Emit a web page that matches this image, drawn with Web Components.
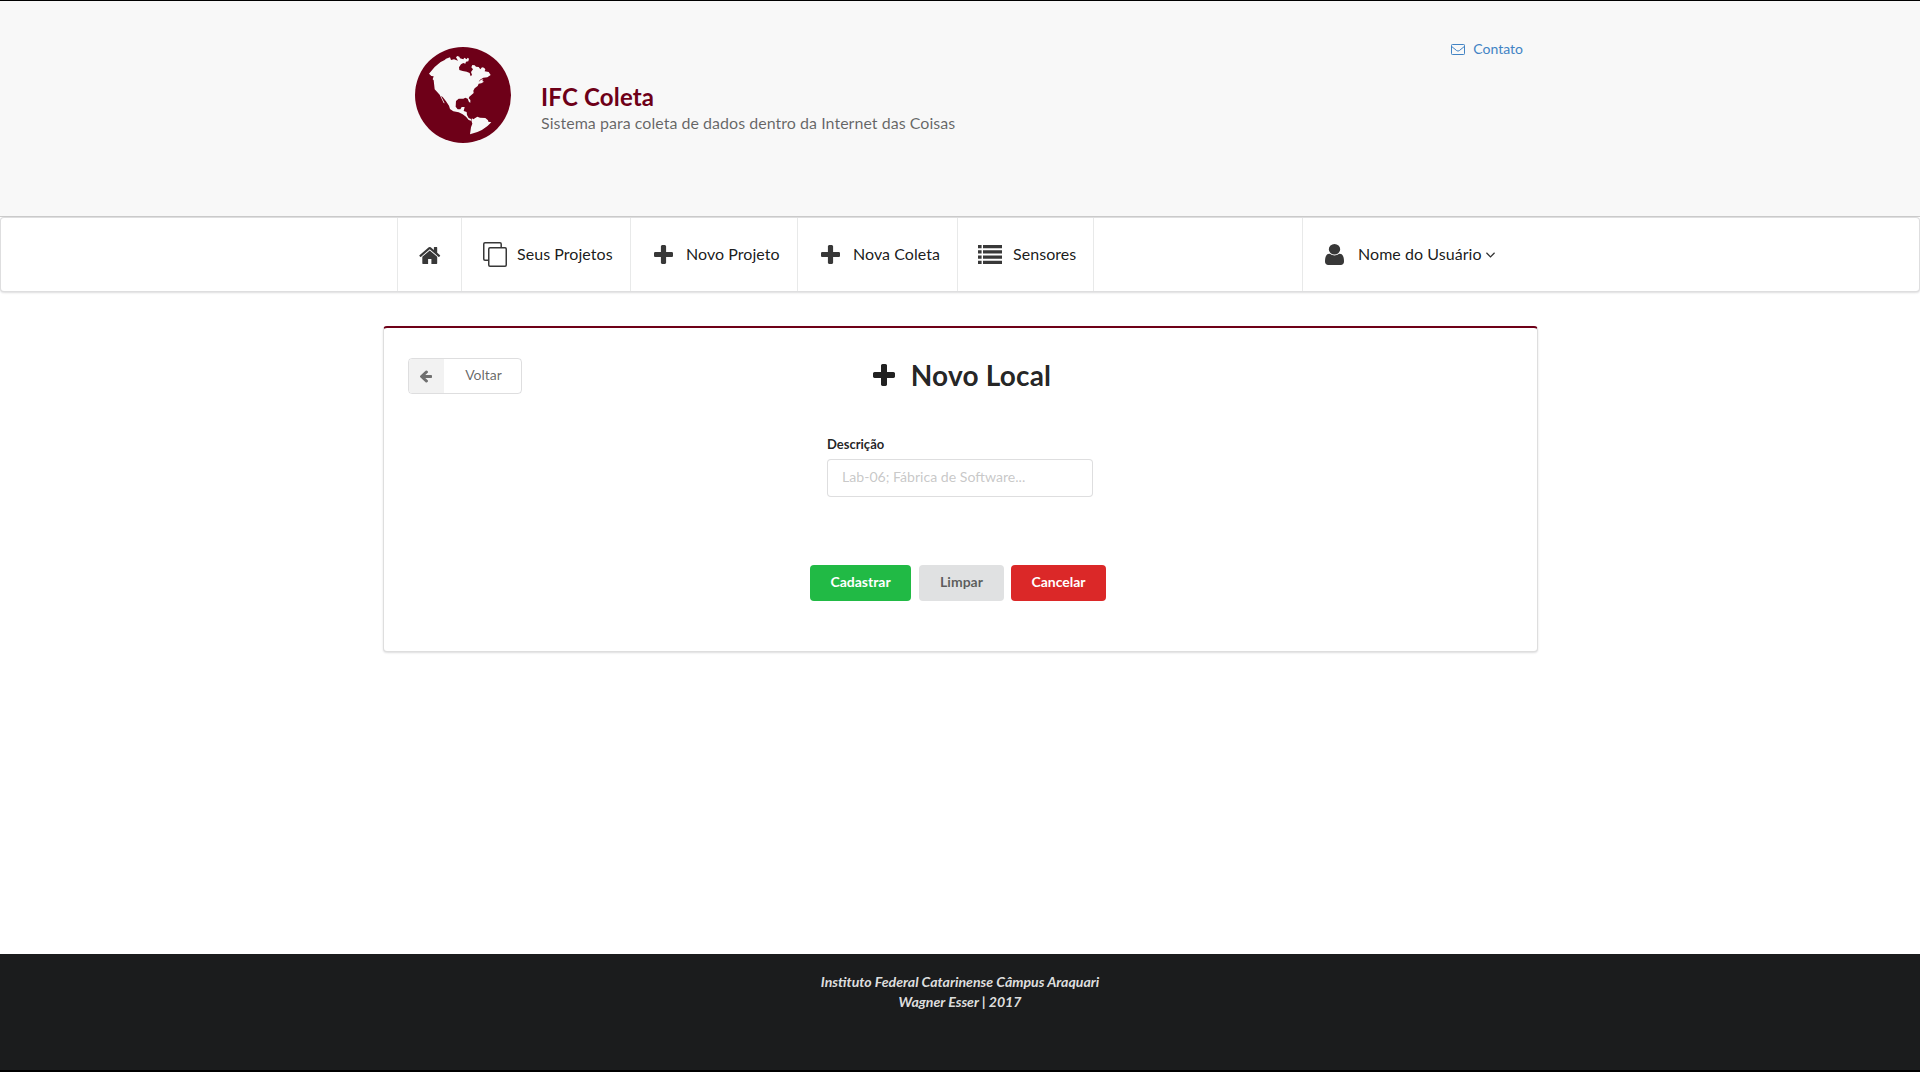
<!DOCTYPE html>
<html lang="pt-BR">
<head>
<meta charset="utf-8">
<title>IFC Coleta</title>
<style>
html,body{margin:0;padding:0}
body{font-family:Lato,"Liberation Sans",sans-serif;font-size:14px;line-height:20px;color:rgba(0,0,0,.87);background:#fff;overflow:hidden}
</style>
</head>
<body>
<coleta-app></coleta-app>
<script>
const ICONS = {
  globe: ['45 51 288 288', '<circle cx="189" cy="195" r="144"/><path fill="#f8f8f8" d="M87 131L104 111L122 96L134 90L138 86L150 82L153 90L162 88L174 92L168 82L172 78L178 80L180 85L190 88L193 83L200 88L203 83L207 86L205 94L198 95L196 101L190 99L183 103L177 112L178 120L188 123L200 125L209 129L212 139L216 135L213 126L219 118L214 112L217 105L224 106L228 110L236 111L241 118L246 112L252 113L256 118L254 124L266 126L272 135L262 142L250 143L240 149L236 156L243 149L250 148L247 153L252 155L244 160L236 161L233 168L224 175L220 182L221 189L208 200L206 205L211 210V218L207 216L203 206L196 203L190 206L176 206L168 213L167 230L173 238L181 238L185 231L194 231L191 243L200 246L201 255L206 264L213 267V272L206 270L198 260L188 253L176 247L160 244L150 237L147 227L138 214L128 201L123 198L134 220L131 219L119 194L104 178L101 151L98 148L101 139L94 138ZM214 271L216 265L220 268L232 260L240 263L256 264L264 271L265 275L274 277Q250 305 210 313L213 292L217 281Z"/>'],
  home: ['64 253 1664 1283', '<path d="M1472 992v480q0 26-19 45t-45 19h-384v-384h-256v384h-384q-26 0-45-19t-19-45v-480q0-1 .5-3t.5-3l575-474 575 474q1 2 1 6zm223-69l-62 74q-8 9-21 11h-3q-13 0-21-7l-692-577-692 577q-12 8-24 7-13-2-21-11l-62-74q-8-10-7-23.5t11-21.5l719-599q32-26 76-26t76 26l244 204v-195q0-14 9-23t23-9h192q14 0 23 9t9 23v408l219 182q10 8 11 21.5t-7 23.5z"/>'],
  copy: ['0 0 24 25', '<g fill="none" stroke="currentColor" stroke-width="1.5"><rect x="5.75" y="5.75" width="17.5" height="18.5" rx="1.2"/><path d="M5.5 18.2H2Q.75 18.2 .75 17V2Q.75.75 2 .75H17Q18.2.75 18.2 2V5.5"/></g>'],
  plus: ['192 128 1408 1408', '<path d="M1600 736v192q0 40-28 68t-68 28h-416v416q0 40-28 68t-68 28h-192q-40 0-68-28t-28-68v-416h-416q-40 0-68-28t-28-68v-192q0-40 28-68t68-28h416v-416q0-40 28-68t68-28h192q40 0 68 28t28 68v416h416q40 0 68 28t28 68z"/>'],
  list: ['0 0 24 19', '<path d="M0 0h3.6v3.2H0zM5 0h19v3.2H5zM0 5.2h3.6v3.2H0zM5 5.2h19v3.2H5zM0 10.5h3.6v3.2H0zM5 10.5h19v3.2H5zM0 15.8h3.6V19H0zM5 15.8h19V19H5z"/>'],
  user: ['256 128 1280 1536', '<path d="M1536 1399q0 109-62.5 187t-150.5 78h-854q-88 0-150.5-78t-62.5-187q0-85 8.5-160.5t31.5-152 58.5-131 94-89 134.5-34.5q131 128 313 128t313-128q76 0 134.5 34.5t94 89 58.5 131 31.5 152 8.5 160.5zm-256-887q0 159-112.5 271.5t-271.5 112.5-271.5-112.5-112.5-271.5 112.5-271.5 271.5-112.5 271.5 112.5 112.5 271.5z"/>'],
  mail: ['0 0 14 11', '<g fill="none" stroke="currentColor"><rect x=".5" y=".5" width="13" height="10" rx=".8"/><path d="M.8 2.6L5.7 6.6Q7 7.6 8.3 6.6L13.2 2.6"/></g>'],
  down: ['0 0 9 6', '<path d="M.4 .8L4.5 4.9L8.6 .8" fill="none" stroke="currentColor" stroke-width="1.3"/>'],
  left: ['64 125 1472 1667', '<path d="M1536 896v128q0 53-32.500 90.500t-84.500 37.500h-704l293 294q38 36 38 90t-38 90l-75 76q-37 37-90 37-52 0-91-37l-651-652q-37-37-37-90 0-52 37-91l651-650q38-38 91-38 52 0 90 38l75 74q38 38 38 91t-38 91l-293 293h704q52 0 84.500 37.500t32.500 90.500z"/>']
};
const define = (name, render) => customElements.define(name, class extends HTMLElement {
  connectedCallback() {
    if (!this.shadowRoot) this.attachShadow({mode: 'open'}).innerHTML = render(this);
  }
});

define('ui-icon', el => {
  const [box, art] = ICONS[el.getAttribute('name')];
  return `<style>:host{display:block;flex:none;width:${el.getAttribute('w')}px;height:${el.getAttribute('h')}px}svg{display:block;width:100%;height:100%}</style>
  <svg viewBox="${box}" preserveAspectRatio="none" fill="currentColor">${art}</svg>`;
});

define('site-header', () => `<style>
:host{display:block;box-sizing:border-box;height:217px;background:#f8f8f8;border-top:1px solid #000;border-bottom:1px solid #ccc}
.in{width:1127px;margin:0 auto;display:flex;align-items:flex-start;box-sizing:border-box;padding-left:18px}
.logo{color:#6e0018;margin-top:46px}
.t{margin:80px 0 0 30.500px;flex:1}
h1{margin:0;font-size:24px;line-height:31px;color:#6e0018;font-weight:700;letter-spacing:.18px}
p{margin:0;font-size:16px;line-height:21px;color:rgba(0,0,0,.6);letter-spacing:.03px}
a{display:flex;align-items:center;color:#4183c4;margin:38px 0.500px 0 0;gap:8px}
</style><div class="in"><ui-icon class="logo" name="globe" w="96" h="96"></ui-icon>
<div class="t"><h1>IFC Coleta</h1><p>Sistema para coleta de dados dentro da Internet das Coisas</p></div>
<a><ui-icon name="mail" w="14" h="11"></ui-icon><span>Contato</span></a></div>`);

define('nav-item', el => `<style>
:host{display:flex;align-items:center;box-sizing:border-box;height:73px;width:${el.getAttribute('width')}px;padding-left:${el.getAttribute('pad')}px;border-left:1px solid rgba(34,36,38,.1);font-size:16px;line-height:20px;letter-spacing:.05px;color:rgba(0,0,0,.9);white-space:nowrap}
.i{display:flex;color:#383838;width:${el.getAttribute('slotw')}px}
.l{display:flex;align-items:center;margin-top:-2px}
</style><div class="i"><slot name="icon"></slot></div><div class="l"><slot></slot></div>`);

define('site-nav', () => `<style>
:host{display:flex;justify-content:center;box-sizing:border-box;height:75px;background:#fff;border:1px solid rgba(34,36,38,.15);border-radius:4px;box-shadow:0 1px 2px rgba(34,36,38,.15)}
.row{display:flex;width:1126px}
.home{margin-top:2px}
.down{margin:3px 0 0 4px;color:#333}
</style><div class="row">
<nav-item width="64" pad="21" slotw="22"><ui-icon slot="icon" class="home" name="home" w="21.500" h="17"></ui-icon></nav-item>
<nav-item width="169" pad="21" slotw="34"><ui-icon slot="icon" name="copy" w="24" h="25"></ui-icon>Seus Projetos</nav-item>
<nav-item width="167" pad="23" slotw="32"><ui-icon slot="icon" name="plus" w="19" h="19"></ui-icon>Novo Projeto</nav-item>
<nav-item width="160" pad="23" slotw="32"><ui-icon slot="icon" name="plus" w="19" h="19"></ui-icon>Nova Coleta</nav-item>
<nav-item width="136" pad="20" slotw="35"><ui-icon slot="icon" name="list" w="24" h="19"></ui-icon>Sensores</nav-item>
<nav-item width="209" pad="0" slotw="0"></nav-item>
<nav-item width="221" pad="22" slotw="33"><ui-icon slot="icon" name="user" w="19" h="21"></ui-icon>Nome do Usuário<ui-icon class="down" name="down" w="9" h="6"></ui-icon></nav-item>
</div>`);

define('back-button', () => `<style>
:host{display:flex;box-sizing:border-box;width:114px;height:36px;border:1px solid rgba(34,36,38,.15);border-radius:4px;overflow:hidden;color:rgba(0,0,0,.6)}
.i{width:35px;box-sizing:border-box;padding-right:1px;background:#f2f2f2;display:flex;align-items:center;justify-content:center;color:#707070}
.l{flex:1;text-align:center;line-height:32px;padding-left:2px}
</style><div class="i"><ui-icon name="left" w="12" h="13"></ui-icon></div><div class="l"><slot></slot></div>`);

define('ui-button', el => `<style>
:host{display:block;box-sizing:border-box;width:${el.getAttribute('width')}px;height:36px;border-radius:4px;text-align:center;line-height:34px;font-weight:700;background:${el.getAttribute('bg')};color:${el.getAttribute('fg')}}
</style><slot></slot>`);

define('text-field', () => `<style>
:host{display:block;width:266px}
label{display:block;font-size:13px;font-weight:700;line-height:18px;margin-bottom:6px}
input{display:block;box-sizing:border-box;width:266px;height:38px;border:1px solid rgba(34,36,38,.15);border-radius:4px;padding:0 14px 3px;font:14.120px Lato,"Liberation Sans",sans-serif;outline:0;background:#fff}
input::placeholder{color:rgba(191,191,191,.87);opacity:1}
</style><label>Descrição</label><input placeholder="Lab-06; Fábrica de Software...">`);

define('local-card', () => `<style>
:host{display:block;box-sizing:border-box;width:1155px;height:326px;margin:34px auto 0 383px;background:#fff;border:1px solid rgba(34,36,38,.15);border-top:2px solid #6e0018;border-radius:4px;box-shadow:0 1px 2px rgba(34,36,38,.15);padding:30px 24px 0}
.head{display:grid;grid-template-columns:1fr auto 1fr;height:36px;align-items:center}
h2{margin:-2px 0 0 3px;display:flex;align-items:center;gap:16px;font-size:28px;line-height:36px;letter-spacing:.2px}
text-field{margin:41px auto 0 419px}
.acts{display:flex;margin:68px 0 0 402px}
</style><div class="head"><back-button>Voltar</back-button><h2><ui-icon name="plus" w="22" h="22"></ui-icon><span>Novo Local</span></h2></div>
<text-field></text-field>
<div class="acts"><ui-button width="101" bg="#21ba45" fg="#fff">Cadastrar</ui-button>
<ui-button style="margin-left:8px" width="85" bg="#e0e1e2" fg="rgba(0,0,0,.6)">Limpar</ui-button>
<ui-button style="margin-left:7px" width="95" bg="#db2828" fg="#fff">Cancelar</ui-button></div>`);

define('site-footer', () => `<style>
:host{display:block;box-sizing:border-box;height:118px;background:#1b1c1d;border-bottom:2px solid #000;padding-top:18px;text-align:center;color:rgba(255,255,255,.87);font-size:14.140px;font-weight:700;font-style:italic}
</style><div>Instituto Federal Catarinense Câmpus Araquari</div><div>Wagner Esser | 2017</div>`);

define('coleta-app', () => `<style>
:host{display:flex;flex-direction:column;height:1072px}
site-footer{margin-top:auto}
</style><site-header></site-header><site-nav></site-nav><local-card></local-card><site-footer></site-footer>`);
</script>
</body>
</html>
